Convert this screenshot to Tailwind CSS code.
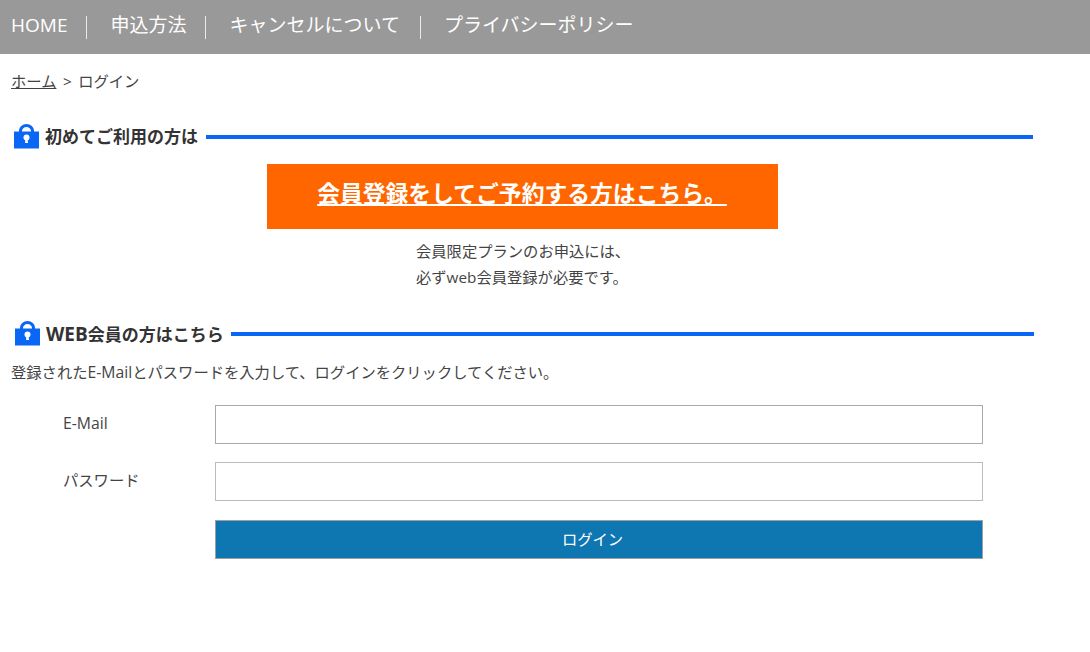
<!DOCTYPE html>
<html lang="ja">

<head>
  <meta charset="UTF-8">
  <meta name="viewport" content="width=device-width, initial-scale=1.0">
  <title>ログイン</title>
  <script src="https://cdn.jsdelivr.net/npm/@tailwindcss/browser@4"></script>
</head>

<body class="bg-white text-[#444] text-[15.3px] font-['Open_Sans','Noto_Sans_CJK_JP',sans-serif]">
  <nav class="h-[54px] bg-[#999999] flex items-center pl-[11px] text-[19px] text-white">
    <a href="#" class="mb-[4px]">HOME</a>
    <span class="w-px h-[23px] bg-white/80 ml-[19px] mr-[23px]"></span>
    <a href="#" class="mb-[4px]">申込方法</a>
    <span class="w-px h-[23px] bg-white/80 ml-[19px] mr-[23px]"></span>
    <a href="#" class="mb-[4px]">キャンセルについて</a>
    <span class="w-px h-[23px] bg-white/80 ml-[20px] mr-[23px]"></span>
    <a href="#" class="mb-[4px]">プライバシーポリシー</a>
  </nav>

  <div class="pl-[11px] pt-[16px] h-[70px] leading-[22px]">
    <a href="#" class="underline">ホーム</a><span class="mx-[6.5px]">&gt;</span>ログイン
  </div>

  <h2 class="flex items-center h-[26px] ml-[14px] w-[1019px] text-[17px] font-bold text-[#333]">
    <svg class="w-[25px] h-[25px] mb-[1px]" viewBox="0 0 25 25">
      <path d="M5 9V6.500a7.500 6.500 0 0 1 15 0V9h-3V7a4.500 4 0 0 0-9 0v2z" fill="#0a66f5" />
      <path d="M0 7.500h25v17H0z" fill="#0a66f5" />
      <circle cx="12.500" cy="13.500" r="3" fill="#fff" />
      <path d="M11.500 14h2l.5 5h-3z" fill="#fff" />
    </svg>
    <span class="ml-[6px]">初めてご利用の方は</span>
    <span class="flex-1 h-[4px] bg-[#0a66f5] ml-[8px]"></span>
  </h2>

  <div class="flex flex-col items-center w-[1044px] mt-[14px]">
    <a href="#" class="w-[511px] h-[65px] pb-[4px] bg-[#ff6600] text-white text-[22.8px] font-bold underline flex items-center justify-center">会員登録をしてご予約する方はこちら。</a>
    <p class="mt-[9px] leading-[26px] w-[212px] whitespace-nowrap">会員限定プランのお申込には、<br>必ずweb会員登録が必要です。</p>
  </div>

  <h2 class="flex items-center h-[26px] ml-[15px] mt-[31px] w-[1019px] text-[17px] font-bold text-[#333]">
    <svg class="w-[25px] h-[25px] mb-[1px]" viewBox="0 0 25 25">
      <path d="M5 9V6.500a7.500 6.500 0 0 1 15 0V9h-3V7a4.500 4 0 0 0-9 0v2z" fill="#0a66f5" />
      <path d="M0 7.500h25v17H0z" fill="#0a66f5" />
      <circle cx="12.500" cy="13.500" r="3" fill="#fff" />
      <path d="M11.500 14h2l.5 5h-3z" fill="#fff" />
    </svg>
    <span class="ml-[6px]"><span class="text-[19px]">WEB</span>会員の方はこちら</span>
    <span class="flex-1 h-[4px] bg-[#0a66f5] ml-[7px]"></span>
  </h2>

  <p class="pl-[11px] mt-[14px] leading-[22px]">登録された<span class="text-[15.750px]">E-Mail</span>とパスワードを入力して、ログインをクリックしてください。</p>

  <form class="mt-[22px] ml-[63px] w-[920px] grid grid-cols-[152px_768px]">
    <label class="pt-[6px] leading-[24px] text-[15.750px]">E-Mail</label>
    <input type="text" class="h-[39px] border border-[#aaaaaa] bg-white">
    <label class="pt-[24px] leading-[24px]">パスワード</label>
    <input type="password" class="mt-[18px] h-[39px] border border-[#bbbbbb] bg-white">
    <button type="button" class="col-start-2 mt-[19px] h-[39px] pr-[13px] pb-[1px] bg-[#0e76b0] border border-[#a0a0a0] text-white">ログイン</button>
  </form>
</body>

</html>
